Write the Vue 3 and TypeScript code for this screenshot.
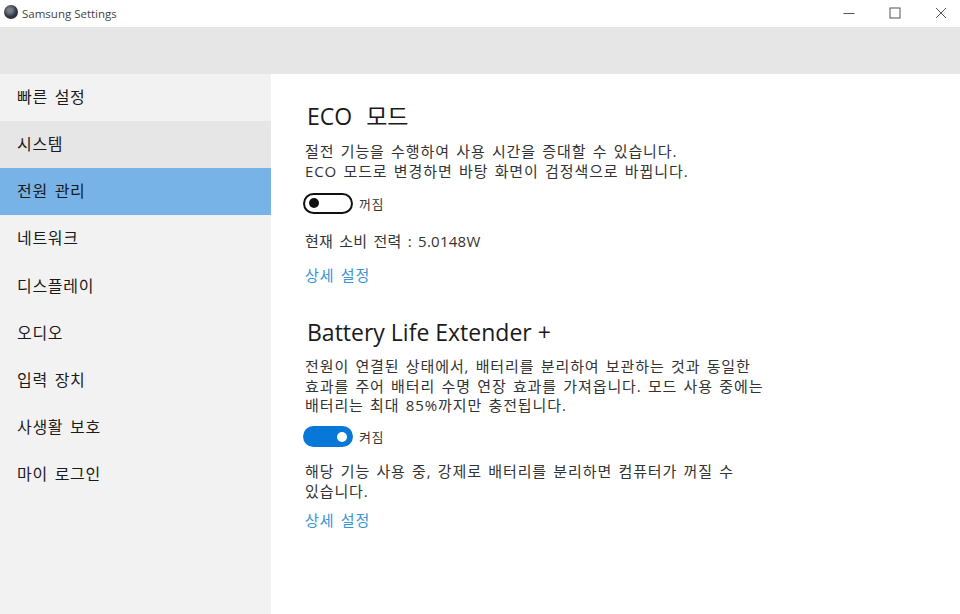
<template>
  <div class="window">
    <header class="titlebar">
      <div class="app-title">
        <span class="app-icon"></span>
        <span>Samsung Settings</span>
      </div>
      <div class="window-buttons">
        <button class="win-btn">
          <svg width="12" height="12" viewBox="0 0 12 12"><path d="M0.5 6.5H11.5" stroke="#555" fill="none" /></svg>
        </button>
        <button class="win-btn">
          <svg width="12" height="12" viewBox="0 0 12 12"><rect x="1" y="1" width="10" height="10" stroke="#555" fill="none" /></svg>
        </button>
        <button class="win-btn">
          <svg width="12" height="12" viewBox="0 0 12 12"><path d="M1 1L11 11M11 1L1 11" stroke="#555" fill="none" /></svg>
        </button>
      </div>
    </header>
    <div class="toolbar"></div>
    <div class="body">
      <nav class="sidebar">
        <div
          v-for="item in menu"
          :key="item"
          class="menu-item"
          :class="{ hover: item === '시스템', active: item === '전원 관리' }"
        >{{ item }}</div>
      </nav>
      <main class="content">
        <section class="eco">
          <h2>ECO 모드</h2>
          <p class="intro">절전 기능을 수행하여 사용 시간을 증대할 수 있습니다.<br />ECO 모드로 변경하면 바탕 화면이 검정색으로 바뀝니다.</p>
          <div class="toggle-row">
            <span class="toggle"></span>
            <span class="toggle-label">꺼짐</span>
          </div>
          <p class="power">현재 소비 전력 : 5.0148W</p>
          <a class="link">상세 설정</a>
        </section>
        <section class="extender">
          <h2>Battery Life Extender +</h2>
          <p class="intro">전원이 연결된 상태에서, 배터리를 분리하여 보관하는 것과 동일한<br />효과를 주어 배터리 수명 연장 효과를 가져옵니다. 모드 사용 중에는<br />배터리는 최대 85%까지만 충전됩니다.</p>
          <div class="toggle-row">
            <span class="toggle on"></span>
            <span class="toggle-label">켜짐</span>
          </div>
          <p class="warning">해당 기능 사용 중, 강제로 배터리를 분리하면 컴퓨터가 꺼질 수<br />있습니다.</p>
          <a class="link">상세 설정</a>
        </section>
      </main>
    </div>
  </div>
</template>

<script setup lang="ts">
const menu: string[] = [
  '빠른 설정',
  '시스템',
  '전원 관리',
  '네트워크',
  '디스플레이',
  '오디오',
  '입력 장치',
  '사생활 보호',
  '마이 로그인',
]
</script>

<style>
html,
body {
  margin: 0;
  background: #fff;
}
</style>

<style scoped>
.window {
  width: 960px;
  height: 614px;
  display: flex;
  flex-direction: column;
  overflow: hidden;
  font-family: "Open Sans", "Noto Sans CJK KR", sans-serif;
  color: #1f1f1f;
  background: #fff;
}

.titlebar {
  height: 27px;
  display: flex;
  justify-content: space-between;
  align-items: flex-start;
}

.app-title {
  display: flex;
  align-items: center;
  gap: 4px;
  height: 27px;
  padding-left: 4px;
  font-size: 11.5px;
  color: #444;
}

.app-icon {
  width: 14px;
  height: 14px;
  margin-top: -3px;
  border-radius: 50%;
  background: radial-gradient(circle at 42% 38%, #75808a 0 18%, #2f343b 55%, #33333c 78%, #8a3f9a 100%);
}

.window-buttons {
  display: flex;
}

.win-btn {
  box-sizing: border-box;
  width: 46px;
  height: 25px;
  padding: 0 0 0 8px;
  border: none;
  background: transparent;
  display: flex;
  align-items: center;
  justify-content: center;
}

.toolbar {
  height: 47px;
  background: #e6e6e6;
}

.body {
  flex: 1;
  display: flex;
  min-height: 0;
}

.sidebar {
  width: 271px;
  background: #f2f2f2;
}

.menu-item {
  height: 47.15px;
  padding-left: 17px;
  line-height: 47px;
  font-size: 16px;
  letter-spacing: 0.7px;
  word-spacing: 2px;
  color: #1a1a1a;
}

.menu-item.hover {
  background: #e6e6e6;
}

.menu-item.active {
  background: #77b3e6;
}

.content {
  flex: 1;
  padding: 26px 0 0 34px;
}

h2 {
  margin: 0 0 0 2px;
  font-weight: 400;
  font-size: 23px;
  line-height: 32px;
  color: #1a1a1a;
}

.eco h2 {
  word-spacing: 8px;
}

p {
  margin: 0;
  font-size: 15px;
  line-height: 20px;
  letter-spacing: 0.9px;
  word-spacing: 1.5px;
  color: #333;
}

.eco .intro {
  margin-top: 9px;
}

.toggle-row {
  display: flex;
  align-items: center;
  gap: 6px;
  margin: 11px 0 0 -2px;
  height: 22px;
}

.toggle {
  box-sizing: border-box;
  position: relative;
  width: 50px;
  height: 21px;
  border: 2px solid #111;
  border-radius: 11px;
  background: #fff;
}

.toggle::after {
  content: "";
  position: absolute;
  left: 4px;
  top: 3.5px;
  width: 10px;
  height: 10px;
  border-radius: 50%;
  background: #111;
}

.toggle.on {
  border-color: #0878d8;
  background: #0878d8;
}

.toggle.on::after {
  left: auto;
  right: 4px;
  background: #fff;
}

.toggle-label {
  font-size: 13px;
  letter-spacing: 0.6px;
  color: #333;
}

.eco .power {
  margin-top: 17px;
  letter-spacing: 0.25px;
  word-spacing: 2px;
}

.link {
  display: block;
  margin-top: 14px;
  font-size: 15px;
  line-height: 20px;
  letter-spacing: 0.9px;
  word-spacing: 1.5px;
  color: #3a94d8;
}

.extender {
  margin-top: 31px;
}

.extender h2 {
  margin-bottom: 9px;
}

.extender .intro {
  line-height: 19.5px;
}

.extender .toggle-row {
  margin-top: 10px;
}

.extender .warning {
  margin-top: 13px;
}

.extender .link {
  margin-top: 9px;
}
</style>
